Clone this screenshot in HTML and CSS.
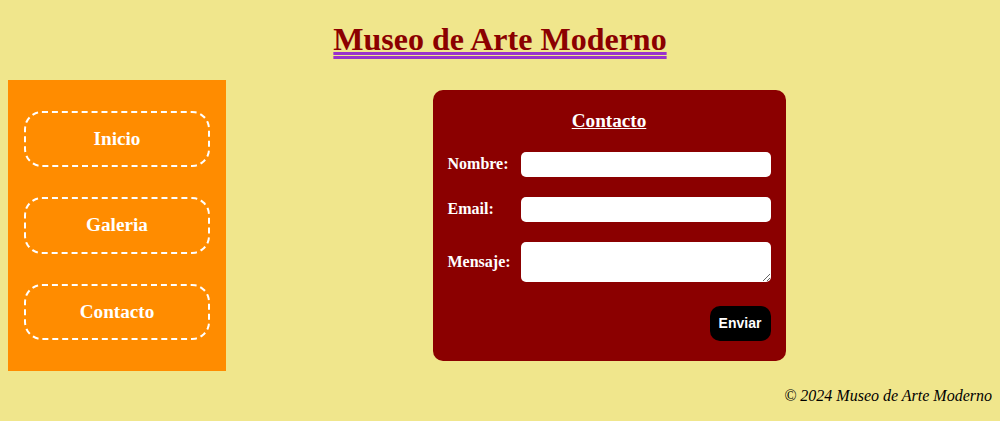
FILE: index.html
```html
<!DOCTYPE html>
<html lang="es">
<head>
<meta charset="utf-8">
<title>Museo de Arte Moderno</title>
<link rel="stylesheet" href="styles.css">
</head>
<body>
<header class="site-header">
  <h1 class="site-title">Museo de Arte Moderno</h1>
</header>
<div class="layout">
  <nav class="sidebar">
    <a class="nav-link" href="#">Inicio</a>
    <a class="nav-link" href="#">Galeria</a>
    <a class="nav-link" href="#">Contacto</a>
  </nav>
  <main class="content">
    <form class="contact-form">
      <h2 class="form-title">Contacto</h2>
      <div class="form-grid">
        <label class="form-label" for="nombre">Nombre:</label>
        <input class="form-input" id="nombre" type="text">
        <label class="form-label" for="email">Email:</label>
        <input class="form-input" id="email" type="email">
        <label class="form-label" for="mensaje">Mensaje:</label>
        <textarea class="form-input form-textarea" id="mensaje" rows="2"></textarea>
      </div>
      <div class="form-actions">
        <button class="submit-btn" type="button">Enviar</button>
      </div>
    </form>
  </main>
</div>
<footer class="site-footer">
  <p class="copyright">© 2024 Museo de Arte Moderno</p>
</footer>
</body>
</html>
```
FILE: styles.css
```css
html, body {
  background: #F0E68C;
}
body {
  margin: 8px;
  font-family: "Liberation Serif", "Times New Roman", serif;
  color: #000;
}
.site-header {
  text-align: center;
}
.site-title {
  margin: 13.44px 0 21.44px;
  font-size: 32px;
  font-weight: bold;
  color: #8B0000;
  text-decoration: underline double #9932CC;
  text-decoration-thickness: 3px;
  text-underline-offset: 2px;
}
.layout {
  display: flex;
  align-items: flex-start;
}
.sidebar {
  width: 186px;
  background: #FF8C00;
  padding: 31px 16px;
  display: flex;
  flex-direction: column;
  gap: 30px;
}
.nav-link {
  display: block;
  border: 2px dashed #fff;
  border-radius: 18px;
  padding: 15px 0;
  line-height: 22.5px;
  text-align: center;
  color: #fff;
  font-weight: bold;
  font-size: 19.2px;
  text-decoration: none;
}
.content {
  flex: 1;
  display: flex;
  justify-content: center;
}
.contact-form {
  margin-top: 10px;
  width: 323px;
  background: #8B0000;
  border-radius: 10px;
  padding: 20px 15px 20px;
  color: #fff;
}
.form-title {
  margin: 0 0 20px;
  text-align: center;
  font-size: 19.2px;
  text-decoration: underline;
}
.form-grid {
  display: grid;
  grid-template-columns: 63px 250px;
  column-gap: 10px;
  row-gap: 20px;
  align-items: center;
}
.form-label {
  font-weight: bold;
  font-size: 16px;
}
.form-input {
  border: none;
  border-radius: 5px;
  padding: 5px;
  height: 25px;
  box-sizing: border-box;
  background: #fff;
  font-size: 13.33px;
}
.form-textarea {
  height: 40px;
  resize: vertical;
  font-family: "Liberation Mono", monospace;
}
.form-actions {
  display: flex;
  justify-content: flex-end;
  margin-top: 24px;
}
.submit-btn {
  width: 61px;
  height: 35px;
  border: none;
  border-radius: 10px;
  background: #000;
  color: #fff;
  font-family: "Liberation Sans", Arial, sans-serif;
  font-weight: bold;
  font-size: 14px;
  padding: 0;
}
.site-footer {
  text-align: right;
}
.copyright {
  margin: 16px 0;
  font-style: italic;
  font-size: 16px;
}
```
